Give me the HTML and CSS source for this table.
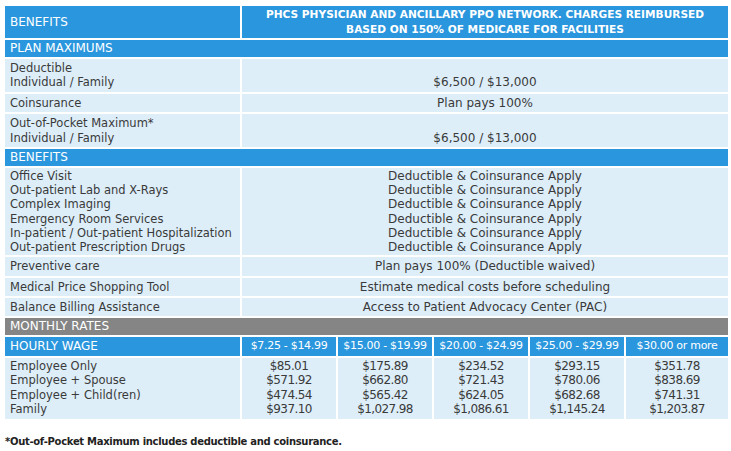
FILE: index.html
```html
<!DOCTYPE html>
<html>
<head>
<meta charset="utf-8">
<link rel="stylesheet" href="styles.css">
</head>
<body>
<div class="page">
<table class="plan">
  <colgroup>
    <col class="c-label"><col class="c-rate"><col class="c-rate"><col class="c-rate"><col class="c-rate"><col class="c-last">
  </colgroup>
  <tr class="head">
    <td class="lbl">BENEFITS</td>
    <td colspan="5" class="title">PHCS PHYSICIAN AND ANCILLARY PPO NETWORK. CHARGES REIMBURSED<br>BASED ON 150% OF MEDICARE FOR FACILITIES</td>
  </tr>
  <tr class="section"><td colspan="6">PLAN MAXIMUMS</td></tr>
  <tr class="row">
    <td class="lbl">Deductible<br>Individual / Family</td>
    <td colspan="5" class="val bottom">$6,500 / $13,000</td>
  </tr>
  <tr class="row">
    <td class="lbl">Coinsurance</td>
    <td colspan="5" class="val">Plan pays 100%</td>
  </tr>
  <tr class="row">
    <td class="lbl">Out-of-Pocket Maximum*<br>Individual / Family</td>
    <td colspan="5" class="val bottom">$6,500 / $13,000</td>
  </tr>
  <tr class="section"><td colspan="6">BENEFITS</td></tr>
  <tr class="row tight">
    <td class="lbl">Office Visit<br>Out-patient Lab and X-Rays<br>Complex Imaging<br>Emergency Room Services<br>In-patient / Out-patient Hospitalization<br>Out-patient Prescription Drugs</td>
    <td colspan="5" class="val">Deductible &amp; Coinsurance Apply<br>Deductible &amp; Coinsurance Apply<br>Deductible &amp; Coinsurance Apply<br>Deductible &amp; Coinsurance Apply<br>Deductible &amp; Coinsurance Apply<br>Deductible &amp; Coinsurance Apply</td>
  </tr>
  <tr class="row">
    <td class="lbl">Preventive care</td>
    <td colspan="5" class="val">Plan pays 100% (Deductible waived)</td>
  </tr>
  <tr class="row">
    <td class="lbl">Medical Price Shopping Tool</td>
    <td colspan="5" class="val">Estimate medical costs before scheduling</td>
  </tr>
  <tr class="row">
    <td class="lbl">Balance Billing Assistance</td>
    <td colspan="5" class="val">Access to Patient Advocacy Center (PAC)</td>
  </tr>
  <tr class="gray"><td colspan="6">MONTHLY RATES</td></tr>
  <tr class="wage">
    <td class="lbl">HOURLY WAGE</td>
    <td>$7.25 - $14.99</td>
    <td>$15.00 - $19.99</td>
    <td>$20.00 - $24.99</td>
    <td>$25.00 - $29.99</td>
    <td>$30.00 or more</td>
  </tr>
  <tr class="rates">
    <td class="lbl">Employee Only<br>Employee + Spouse<br>Employee + Child(ren)<br>Family</td>
    <td>$85.01<br>$571.92<br>$474.54<br>$937.10</td>
    <td>$175.89<br>$662.80<br>$565.42<br>$1,027.98</td>
    <td>$234.52<br>$721.43<br>$624.05<br>$1,086.61</td>
    <td>$293.15<br>$780.06<br>$682.68<br>$1,145.24</td>
    <td>$351.78<br>$838.69<br>$741.31<br>$1,203.87</td>
  </tr>
</table>
<p class="note">*Out-of-Pocket Maximum includes deductible and coinsurance.</p>
</div>
</body>
</html>
```
FILE: styles.css
```css
html, body {
  margin: 0;
  padding: 0;
  background: #ffffff;
}
body {
  font-family: "DejaVu Sans", "Liberation Sans", sans-serif;
  color: #3a3a3a;
}
.page {
  padding: 4px 4px 0 3px;
}
.plan {
  width: 725px;
  border-collapse: collapse;
  table-layout: fixed;
  font-size: 12px;
  line-height: 14.4px;
}
.c-label { width: 237px; }
.c-rate { width: 96px; }
.c-last { width: 104px; }
.plan td {
  border: 2px solid #ffffff;
  padding: 1px 5px;
  background: #ddeef9;
  vertical-align: middle;
}
.plan .lbl {
  font-size: 11.5px;
  white-space: nowrap;
}
.plan .head td {
  background: #2a96dd;
  color: #ffffff;
  height: 29px;
  font-size: 12px;
}
.plan .head .title {
  text-align: center;
  font-weight: bold;
  font-size: 10.6px;
  line-height: 15px;
  white-space: nowrap;
}
.plan .section td {
  background: #2a96dd;
  color: #ffffff;
  font-size: 12px;
  height: 15px;
}
.plan .row td {
  padding-top: 2px;
  padding-bottom: 2px;
}
.plan .tight td {
  padding-top: 1px;
  padding-bottom: 1px;
  line-height: 14.2px;
}
.plan .val {
  text-align: center;
}
.plan .bottom {
  vertical-align: bottom;
}
.plan .gray td {
  background: #858585;
  color: #ffffff;
  font-size: 12px;
  height: 14px;
}
.plan .wage td {
  background: #2a96dd;
  color: #ffffff;
  text-align: center;
  font-size: 11px;
  letter-spacing: -0.3px;
  height: 17px;
  padding: 1px 0;
  white-space: nowrap;
}
.plan .wage .lbl {
  text-align: left;
  padding-left: 5px;
  font-size: 12px;
  letter-spacing: 0;
}
.plan .rates td {
  text-align: center;
  padding: 1px 0 2px;
  letter-spacing: -0.6px;
}
.plan .rates .lbl {
  text-align: left;
  padding-left: 5px;
  letter-spacing: 0;
}
.note {
  margin: 15px 0 0 2px;
  font-size: 10px;
  letter-spacing: -0.3px;
  font-weight: bold;
  color: #222222;
}
```
